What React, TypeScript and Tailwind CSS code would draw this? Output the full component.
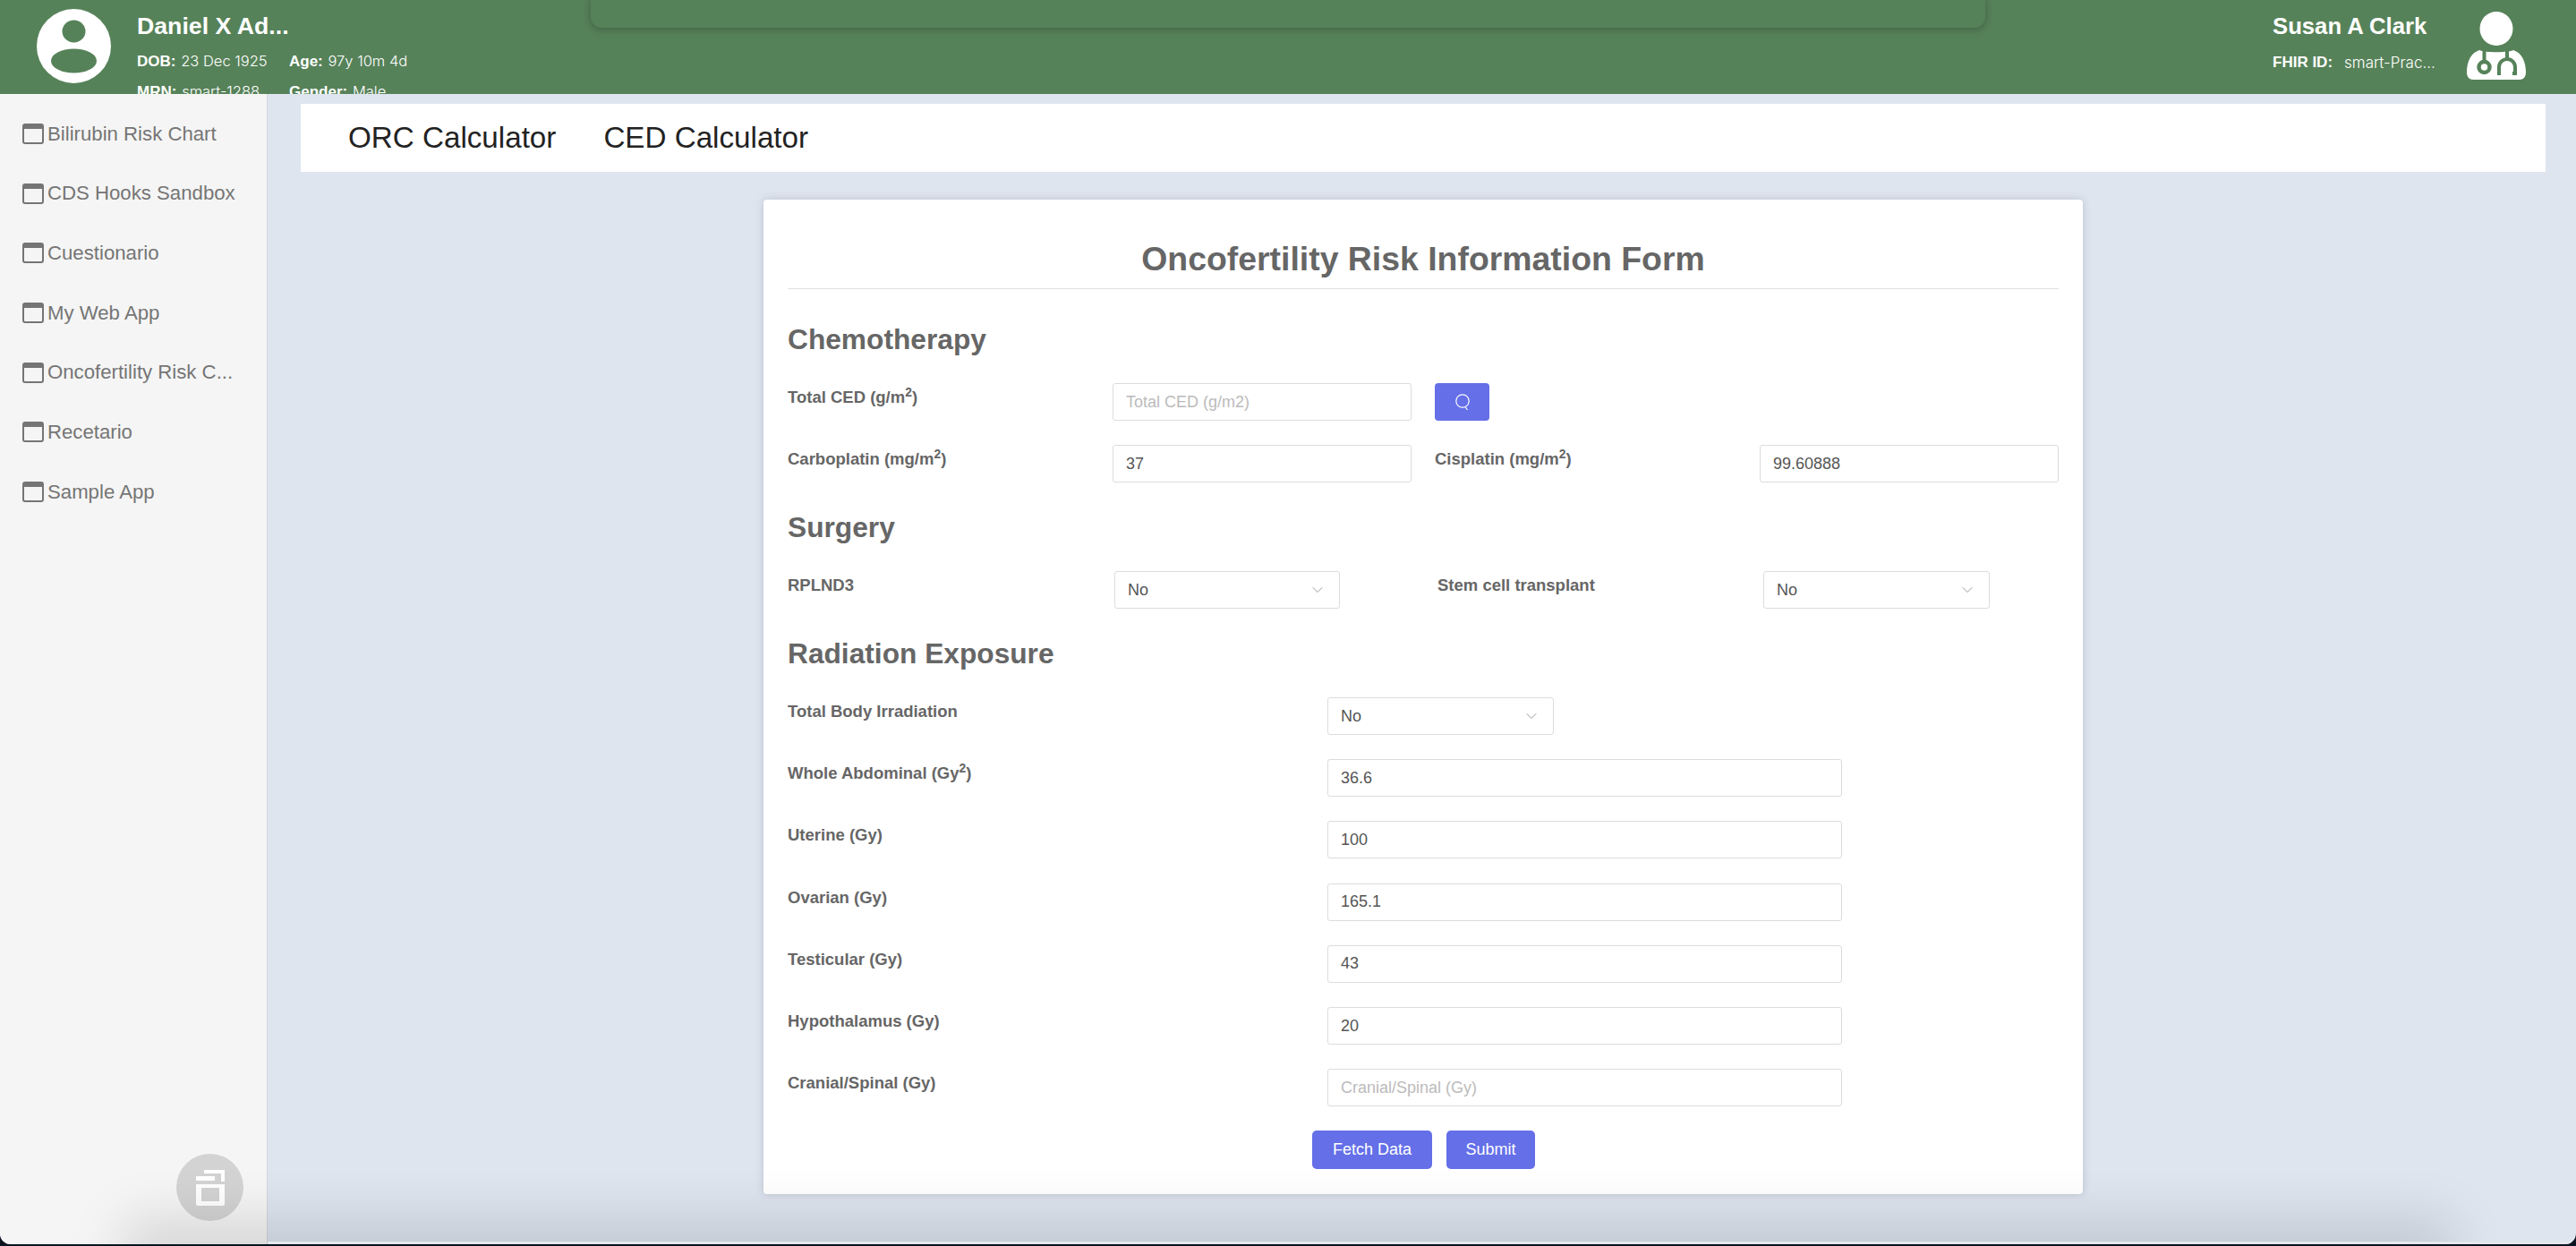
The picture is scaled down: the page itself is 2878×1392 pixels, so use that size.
import React from 'react';
import { ChevronDown } from 'lucide-react';

const apps = ['Bilirubin Risk Chart', 'CDS Hooks Sandbox', 'Cuestionario', 'My Web App', 'Oncofertility Risk C...', 'Recetario', 'Sample App'];

const exposures: { label: React.ReactNode; value: string; placeholder?: string }[] = [
  { label: <>Whole Abdominal (Gy<sup>2</sup>)</>, value: '36.6' },
  { label: 'Uterine (Gy)', value: '100' },
  { label: 'Ovarian (Gy)', value: '165.1' },
  { label: 'Testicular (Gy)', value: '43' },
  { label: 'Hypothalamus (Gy)', value: '20' },
  { label: 'Cranial/Spinal (Gy)', value: '', placeholder: 'Cranial/Spinal (Gy)' },
];

const PatientIcon = () => (
  <svg width="83" height="83" viewBox="0 0 83 83" className="shrink-0">
    <circle cx="41.5" cy="41.5" r="41.5" fill="#fff" />
    <ellipse cx="41.5" cy="25" rx="13" ry="12.5" fill="#568259" />
    <ellipse cx="41.5" cy="58" rx="25.5" ry="13.5" fill="#568259" />
  </svg>
);

const DoctorIcon = () => (
  <svg width="66" height="76" viewBox="0 0 66 76" className="shrink-0">
    <ellipse cx="33" cy="19" rx="18.5" ry="19" fill="#fff" />
    <path d="M14 43 C5 46 0 55 0 68 C0 73 3 76 7 76 H59 C63 76 66 73 66 68 C66 55 61 46 52 43 C46 46 20 46 14 43 Z" fill="#fff" />
    <rect x="17.5" y="41" width="4" height="14" fill="#568259" />
    <rect x="43" y="41" width="4" height="12" fill="#568259" />
    <circle cx="19.5" cy="62" r="6" fill="#fff" stroke="#568259" strokeWidth="4.5" />
    <path d="M38 69 H36 V62 A9 9 0 0 1 54 62 V69 H51" fill="none" stroke="#568259" strokeWidth="4" />
  </svg>
);

const AppIcon = () => (
  <svg width="24" height="23" viewBox="0 0 24 23" className="shrink-0">
    <rect x="1" y="1" width="22" height="21" rx="2" fill="none" stroke="#757575" strokeWidth="2" />
    <rect x="1" y="1" width="22" height="5" fill="#757575" />
  </svg>
);

const SearchIcon = () => (
  <svg width="18" height="20" viewBox="0 0 18 20" fill="none" stroke="#fff" strokeWidth="1.2">
    <circle cx="9" cy="9" r="7.2" />
    <path d="M12 15.5 L14.5 19" />
  </svg>
);

const FabIcon = () => (
  <svg width="32" height="40" viewBox="0 0 32 40" fill="#fff">
    <path d="M9 0 H32 V13 H28 V4 H9 Z" />
    <rect x="0" y="7" width="21" height="5" />
    <path fillRule="evenodd" d="M0 16 H32 V38 Q32 40 30 40 H2 Q0 40 0 38 Z M6 20 V35 H26 V20 Z" />
  </svg>
);

const Label = ({ className, children }: { className: string; children: React.ReactNode }) => (
  <div className={`h-8 shrink-0 text-[18.5px] font-bold leading-8 text-[#666] ${className}`}>{children}</div>
);

const Field = ({ value, placeholder, className }: { value?: string; placeholder?: string; className: string }) => (
  <input
    readOnly
    value={value ?? ''}
    placeholder={placeholder}
    className={`h-[42px] shrink-0 rounded-[3px] border border-[#dcdcdc] bg-white px-[14px] text-[18px] text-[#555] outline-none placeholder:text-[#bbbbbb] ${className}`}
  />
);

const SelectBox = ({ className }: { className: string }) => (
  <div className={`flex h-[42px] shrink-0 items-center justify-between rounded-[3px] border border-[#dcdcdc] bg-white pl-[14px] pr-[14px] text-[18px] text-[#555] ${className}`}>
    <span>No</span>
    <ChevronDown size={20} strokeWidth={1} className="text-[#888]" />
  </div>
);

const SectionTitle = ({ className, children }: { className: string; children: React.ReactNode }) => (
  <h2 className={`h-11 text-[31.7px] font-bold leading-[44px] text-[#666] ${className}`}>{children}</h2>
);

const PrimaryButton = ({ className, children }: { className: string; children: React.ReactNode }) => (
  <button className={`h-[43px] rounded-[5px] bg-[#646fe8] text-[18px] text-white ${className}`}>{children}</button>
);

export default function App() {
  return (
    <div className="h-[1392px] w-[2878px] overflow-hidden bg-[#0b1420] font-['Liberation_Sans',sans-serif]">
      <div className="relative flex h-[1390px] flex-col overflow-hidden rounded-b-[12px] bg-[#dee5ef]">
        {/* top bar */}
        <header className="relative flex h-[105px] shrink-0 justify-between overflow-hidden whitespace-nowrap bg-[#568259] text-white">
          <div className="flex pl-[41px] pt-[10px]">
            <PatientIcon />
            <div className="ml-[29px] w-[320px]">
              <div className="text-[26.7px] font-bold leading-[38px]">Daniel X Ad...</div>
              <div className="mt-[8px] flex text-[17px] leading-[24px]">
                <div className="w-[170px]"><b>DOB:</b> <span className="ml-[1px] font-['Inter'] text-[16.5px] font-light">23 Dec 1925</span></div>
                <div><b>Age:</b> <span className="ml-[1px] font-['Inter'] text-[16.5px] font-light">97y 10m 4d</span></div>
              </div>
              <div className="mt-[9px] flex text-[17px] leading-[24px]">
                <div className="w-[170px]"><b>MRN:</b> <span className="ml-[1px] font-['Inter'] text-[16.5px] font-light">smart-1288...</span></div>
                <div><b>Gender:</b> <span className="ml-[1px] font-['Inter'] text-[16.5px] font-light">Male</span></div>
              </div>
            </div>
          </div>
          <div className="absolute left-[660px] top-[-10px] h-[41px] w-[1558px] rounded-[12px] bg-[#568259] shadow-[0_2px_8px_rgba(0,0,0,0.25)]" />
          <div className="flex pr-[56px] pt-[13px]">
            <div className="mr-[34px] w-[183px]">
              <div className="text-[25.7px] font-bold leading-[32px]">Susan A Clark</div>
              <div className="mt-[9px] flex text-[17px] leading-[32px]">
                <b>FHIR ID:</b>
                <span className="ml-[13px] font-['Inter'] font-light">smart-Prac...</span>
              </div>
            </div>
            <DoctorIcon />
          </div>
        </header>

        <div className="flex min-h-0 flex-1">
          {/* app list */}
          <aside className="relative w-[299px] shrink-0 border-r border-[#d3d6da] bg-[#f5f5f5] pt-[11px]">
            {apps.map((app) => (
              <div key={app} className="flex h-[66.7px] items-center gap-[4px] pl-[25px] text-[22.2px] text-[#757575]">
                <AppIcon />
                <span>{app}</span>
              </div>
            ))}
            <div className="absolute left-[197px] top-[1184px] flex h-[75px] w-[75px] items-center justify-center rounded-full bg-[#d3d3d3]">
              <FabIcon />
            </div>
          </aside>

          <main className="min-w-0 flex-1 pl-[37px] pr-[34px] pt-[11px]">
            <nav className="flex h-[76px] items-center gap-[53px] bg-white pl-[53px] text-[33.2px] text-[#222]">
              <span>ORC Calculator</span>
              <span>CED Calculator</span>
            </nav>

            <form className="mx-auto mt-[31px] h-[1111px] w-[1474px] rounded-[4px] bg-white px-[27px] shadow-[0_0_8px_rgba(120,130,150,0.35)]">
              <div className="flex h-[100px] items-end justify-center border-b border-[#dfe1e4] pb-[8px]">
                <h1 className="text-[37.4px] font-bold leading-[50px] text-[#666]">Oncofertility Risk Information Form</h1>
              </div>

              <SectionTitle className="mt-[34px]">Chemotherapy</SectionTitle>
              <div className="mt-[27px] flex">
                <Label className="w-[363px]">Total CED (g/m<sup>2</sup>)</Label>
                <Field placeholder="Total CED (g/m2)" className="w-[334px]" />
                <button type="button" className="ml-[26px] flex h-[42px] w-[61px] items-center justify-center rounded-[4px] bg-[#646fe8]">
                  <SearchIcon />
                </button>
              </div>
              <div className="mt-[27px] flex">
                <Label className="w-[363px]">Carboplatin (mg/m<sup>2</sup>)</Label>
                <Field value="37" className="w-[334px]" />
                <Label className="ml-[26px] w-[363px]">Cisplatin (mg/m<sup>2</sup>)</Label>
                <Field value="99.60888" className="w-[334px]" />
              </div>

              <SectionTitle className="mt-[28px]">Surgery</SectionTitle>
              <div className="mt-[27px] flex">
                <Label className="w-[365px]">RPLND3</Label>
                <SelectBox className="w-[252px]" />
                <Label className="ml-[109px] w-[364px]">Stem cell transplant</Label>
                <SelectBox className="w-[253px]" />
              </div>

              <SectionTitle className="mt-[28px]">Radiation Exposure</SectionTitle>
              <div className="mt-[27px] flex">
                <Label className="w-[603px]">Total Body Irradiation</Label>
                <SelectBox className="w-[253px]" />
              </div>
              <div className="mt-[27px] flex flex-col gap-[27.3px]">
                {exposures.map((row, i) => (
                  <div key={i} className="flex">
                    <Label className="w-[603px]">{row.label}</Label>
                    <Field value={row.value} placeholder={row.placeholder} className="w-[575px]" />
                  </div>
                ))}
              </div>

              <div className="mt-[27px] flex justify-center gap-[16px] pl-[1px]">
                <PrimaryButton className="w-[134px]">Fetch Data</PrimaryButton>
                <PrimaryButton className="w-[99px]">Submit</PrimaryButton>
              </div>
            </form>
          </main>
        </div>

        {/* shadow cast by the window below */}
        <div className="pointer-events-none absolute bottom-[-14px] left-[170px] right-[170px] h-[10px] shadow-[0_0_60px_32px_rgba(0,0,0,0.13)]" />
        <div className="absolute bottom-0 left-[299px] right-0 h-[3px] bg-[#e4e7ec]" />
      </div>
    </div>
  );
}
